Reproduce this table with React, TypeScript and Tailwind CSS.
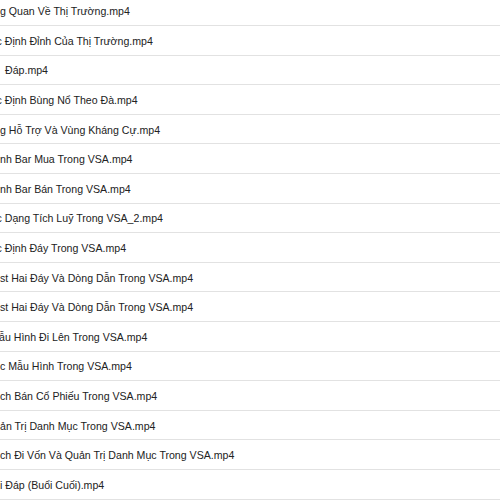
const files = [
  { name: 'g Quan Về Thị Trường.mp4', ml: 'ml-0' },
  { name: 'c Định Đỉnh Của Thị Trường.mp4', ml: '-ml-[3.5px]' },
  { name: 'Đáp.mp4', ml: 'ml-[5px]' },
  { name: 'c Định Bùng Nổ Theo Đà.mp4', ml: '-ml-[3.5px]' },
  { name: 'g Hỗ Trợ Và Vùng Kháng Cự.mp4', ml: 'ml-0' },
  { name: 'nh Bar Mua Trong VSA.mp4', ml: 'ml-0' },
  { name: 'nh Bar Bán Trong VSA.mp4', ml: 'ml-0' },
  { name: 'c Dạng Tích Luỹ Trong VSA_2.mp4', ml: '-ml-[3.5px]' },
  { name: 'c Định Đáy Trong VSA.mp4', ml: '-ml-[3.5px]' },
  { name: 'st Hai Đáy Và Dòng Dẫn Trong VSA.mp4', ml: 'ml-0' },
  { name: 'st Hai Đáy Và Dòng Dẫn Trong VSA.mp4', ml: 'ml-0' },
  { name: 'ẫu Hình Đi Lên Trong VSA.mp4', ml: '-ml-[1px]' },
  { name: 'c Mẫu Hình Trong VSA.mp4', ml: 'ml-0' },
  { name: 'ch Bán Cổ Phiếu Trong VSA.mp4', ml: 'ml-0' },
  { name: 'ản Trị Danh Mục Trong VSA.mp4', ml: 'ml-0' },
  { name: 'ch Đi Vốn Và Quản Trị Danh Mục Trong VSA.mp4', ml: 'ml-0' },
  { name: 'i Đáp (Buổi Cuối).mp4', ml: 'ml-0' },
]

export default function App() {
  return (
    <div className="w-[500px] h-[500px] overflow-hidden bg-white font-['Liberation_Sans',Arial,sans-serif]">
      {/* list starts a bit above the visible area */}
      <ul className="-mt-[3.6px]">
        {files.map((f, i) => (
          <li
            key={i}
            className="h-[29.6px] flex items-center border-b border-[#e2e2e2] overflow-hidden"
          >
            <span className={`text-[10.6px] text-[#222222] whitespace-nowrap pt-[3px] ${f.ml}`}>{f.name}</span>
          </li>
        ))}
      </ul>
    </div>
  )
}
